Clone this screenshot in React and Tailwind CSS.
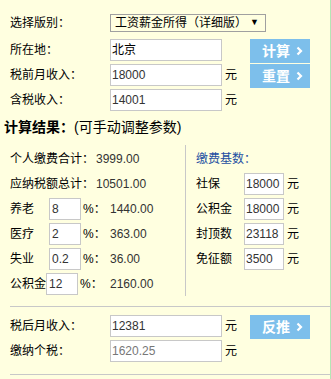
import React from 'react'

const FONT = "font-['Liberation_Sans','Noto_Sans_CJK_SC',sans-serif]"

function Chevron() {
  return (
    <svg width="7" height="10" viewBox="0 0 7 10" className="ml-[6px]">
      <path d="M1.5 1.5 L5 5 L1.5 8.5" fill="none" stroke="#fff" strokeWidth="2.2" />
    </svg>
  )
}

function Btn({ label, className = '' }) {
  return (
    <div className={`w-[60px] h-[24px] bg-[#7dbfeb] flex items-center justify-end pr-[7px] text-white font-bold text-[14px] ${className}`}>
      {label}
      <Chevron />
    </div>
  )
}

function Field({ value, className = '', text = 'text-[#333]' }) {
  return (
    <div className={`h-[22px] bg-white border border-[#c8c8c8] flex items-center pl-[1px] text-[12px] ${text} ${className}`}>
      {value}
    </div>
  )
}

function Row({ label, value, unit, text }) {
  return (
    <div className="flex items-center h-[22px]">
      <span className="w-[100px] text-[12px] text-black">{label}</span>
      <Field value={value} className="w-[112px]" text={text} />
      {unit && <span className="ml-[3px] text-[12px] text-black">{unit}</span>}
    </div>
  )
}

function RateRow({ label, labelW, rate, amount }) {
  return (
    <div className="flex items-center h-[25px] text-[12px] text-black">
      <div className="flex items-center w-[100px]">
        <span className={labelW}>{label}</span>
        <Field value={rate} className="w-[32px] pl-[2px]" />
        <span className="ml-[2px]">%：</span>
      </div>
      <span className="text-[#333]">{amount}</span>
    </div>
  )
}

function BaseRow({ label, value }) {
  return (
    <div className="flex items-center h-[25px] text-[12px] text-black">
      <span className="w-[48px]">{label}</span>
      <Field value={value} className="w-[40px]" />
      <span className="ml-[3px]">元</span>
    </div>
  )
}

export default function App() {
  return (
    <div className={`w-[331px] h-[379px] bg-[#ffffe0] border-r border-[#b5e6b5] overflow-hidden ${FONT}`}>
      <div className="pt-[14px] pl-[10px]">
        <div className="flex items-center h-[18px]">
          <span className="w-[100px] text-[12px] text-black">选择版别：</span>
          <div className="w-[156px] h-[18px] border border-[#a0a0a0] flex items-center justify-between pl-[4px] pr-[6px] text-[12px] text-black">
            <span>工资薪金所得（详细版）</span>
            <span className="text-[9px]">▼</span>
          </div>
        </div>

        <div className="flex mt-[7px]">
          <div className="w-[240px] flex flex-col gap-[3px]">
            <Row label="所在地：" value="北京" text="text-black" />
            <Row label="税前月收入：" value="18000" unit="元" />
            <Row label="含税收入：" value="14001" unit="元" />
          </div>
          <div className="flex flex-col gap-[1px]">
            <Btn label="计算" />
            <Btn label="重置" />
          </div>
        </div>
      </div>

      <div className="mt-[8px] pl-[4px] h-[16px] flex items-center text-[14px] text-black">
        <span className="font-bold">计算结果：</span>
        <span>(可手动调整参数)</span>
      </div>

      <div className="flex mt-[10px]">
        <div className="w-[186px] h-[151px] border-r border-[#c8c8c8] pl-[10px] pt-[1px]">
          <div className="flex items-center h-[25px] text-[12px] text-black">
            个人缴费合计：<span className="ml-[2px] text-[#333]">3999.00</span>
          </div>
          <div className="flex items-center h-[25px] text-[12px] text-black">
            应纳税额总计：<span className="ml-[2px] text-[#333]">10501.00</span>
          </div>
          <RateRow label="养老" labelW="w-[39px]" rate="8" amount="1440.00" />
          <RateRow label="医疗" labelW="w-[39px]" rate="2" amount="363.00" />
          <RateRow label="失业" labelW="w-[39px]" rate="0.2" amount="36.00" />
          <RateRow label="公积金" labelW="w-[36px]" rate="12" amount="2160.00" />
        </div>
        <div className="pl-[10px] pt-[1px]">
          <div className="flex items-center h-[25px] text-[12px] text-[#1e50a2]">缴费基数：</div>
          <BaseRow label="社保" value="18000" />
          <BaseRow label="公积金" value="18000" />
          <BaseRow label="封顶数" value="23118" />
          <BaseRow label="免征额" value="3500" />
        </div>
      </div>

      <div className="ml-[10px] mt-[10px] border-t border-[#c8c8c8]" />

      <div className="pl-[10px] pt-[8px] flex">
        <div className="w-[240px] flex flex-col gap-[3px]">
          <Row label="税后月收入：" value="12381" unit="元" />
          <Row label="缴纳个税：" value="1620.25" unit="元" text="text-[#777]" />
        </div>
        <Btn label="反推" />
      </div>

      <div className="ml-[10px] mt-[12px] border-t border-[#c8c8c8]" />
    </div>
  )
}
